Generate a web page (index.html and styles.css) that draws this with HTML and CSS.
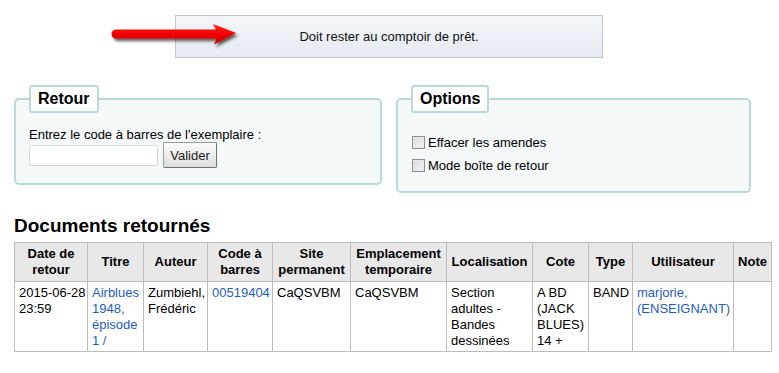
FILE: index.html
```html
<!DOCTYPE html>
<html lang="fr">
<head>
<meta charset="utf-8">
<title>Retour</title>
<link rel="stylesheet" href="styles.css">
</head>
<body>
<div class="top">
  <div class="alert">Doit rester au comptoir de prêt.</div>
  <svg class="arrow" width="136" height="32" viewBox="0 0 136 32" aria-hidden="true">
    <defs>
      <linearGradient id="red" x1="0" y1="0" x2="0" y2="1">
        <stop offset="0" stop-color="#ff2a1a"/>
        <stop offset="0.5" stop-color="#f00000"/>
        <stop offset="1" stop-color="#c80000"/>
      </linearGradient>
      <filter id="sh" x="-10%" y="-30%" width="130%" height="180%">
        <feDropShadow dx="2" dy="2.5" stdDeviation="1.4" flood-color="#000" flood-opacity="0.65"/>
      </filter>
    </defs>
    <path d="M9 9.5 H109 L106 4 L129 13 L107 24.5 L109.5 18.5 H9 A4.5 4.5 0 0 1 9 9.5 Z" fill="url(#red)" filter="url(#sh)"/>
  </svg>
</div>

<div class="panels">
  <fieldset class="box retour">
    <legend>Retour</legend>
    <p class="hint">Entrez le code à barres de l'exemplaire :</p>
    <div class="entry">
      <input class="barcode" type="text">
      <button class="btn" type="button">Valider</button>
    </div>
  </fieldset>
  <fieldset class="box options">
    <legend>Options</legend>
    <label class="opt"><input type="checkbox" class="chk">Effacer les amendes</label>
    <label class="opt"><input type="checkbox" class="chk">Mode boîte de retour</label>
  </fieldset>
</div>

<h2 class="title">Documents retournés</h2>
<table class="returns">
  <colgroup>
    <col class="c1"><col class="c2"><col class="c3"><col class="c4"><col class="c5"><col class="c6"><col class="c7"><col class="c8"><col class="c9"><col class="c10"><col class="c11">
  </colgroup>
  <thead>
    <tr>
      <th>Date de retour</th>
      <th>Titre</th>
      <th>Auteur</th>
      <th>Code à barres</th>
      <th>Site permanent</th>
      <th>Emplacement temporaire</th>
      <th>Localisation</th>
      <th>Cote</th>
      <th>Type</th>
      <th>Utilisateur</th>
      <th>Note</th>
    </tr>
  </thead>
  <tbody>
    <tr>
      <td><span class="nowrap">2015-06-28</span> 23:59</td>
      <td><a href="#">Airblues 1948, épisode 1 /</a></td>
      <td>Zumbiehl, Frédéric</td>
      <td><a href="#">00519404</a></td>
      <td>CaQSVBM</td>
      <td>CaQSVBM</td>
      <td>Section adultes - Bandes dessinées</td>
      <td>A BD (JACK BLUES) 14 +</td>
      <td>BAND</td>
      <td><a href="#">marjorie, (ENSEIGNANT)</a></td>
      <td></td>
    </tr>
  </tbody>
</table>
</body>
</html>
```

FILE: styles.css
```css
html, body {
  margin: 0;
  padding: 0;
  background: #fff;
}
body {
  font-family: "Liberation Sans", Arial, sans-serif;
  font-size: 13px;
  color: #000;
}

.top {
  position: relative;
  padding: 15px 0 0 175px;
}
.alert {
  box-sizing: border-box;
  width: 428px;
  height: 43px;
  border: 1px solid #c4c7cc;
  background: linear-gradient(#f3f5f9, #e6eaf1);
  line-height: 41px;
  text-align: center;
  color: #111;
}
.arrow {
  position: absolute;
  left: 107px;
  top: 20px;
}

.panels {
  display: flex;
  align-items: flex-start;
  gap: 14px;
  margin-top: 27px;
  padding-left: 14px;
}
.box {
  box-sizing: border-box;
  margin: 0;
  padding: 0 13px;
  border: 2px solid #b9d9da;
  border-radius: 5px;
  background: #f4f8f9;
}
.box legend {
  padding: 3px 7px;
  border: 2px solid #b9d9da;
  border-radius: 3px;
  background: #fff;
  font-weight: bold;
  font-size: 16px;
  line-height: 18px;
}
.retour {
  width: 368px;
  height: 100px;
}
.options {
  width: 355px;
  height: 108px;
}
.hint {
  margin: 14px 0 0;
  line-height: 15px;
}
.entry {
  display: flex;
  align-items: center;
  gap: 5px;
}
.barcode {
  box-sizing: border-box;
  width: 129px;
  height: 21px;
  margin: 0;
  border: 1px solid #d6d9dc;
  border-radius: 2px;
  background: #fff;
}
.btn {
  box-sizing: border-box;
  width: 54px;
  height: 26px;
  margin: 0;
  padding: 0;
  border: 1px solid #9a9a9a;
  border-right-color: #707070;
  border-bottom-color: #707070;
  border-radius: 2px;
  background: linear-gradient(#fbfbfb, #dedede);
  font-family: "Liberation Sans", Arial, sans-serif;
  font-size: 13px;
  color: #222;
}
.opt {
  display: flex;
  align-items: center;
  height: 23px;
}
.opt:first-of-type {
  margin-top: 18px;
}
.chk {
  -webkit-appearance: none;
  appearance: none;
  box-sizing: border-box;
  width: 13px;
  height: 13px;
  margin: 0 3px 0 1px;
  border: 1px solid #8e8f8f;
  background: linear-gradient(135deg, #d8d8d8, #f6f6f6);
  box-shadow: inset 0 0 0 1px #e8e8e8;
}

.title {
  margin: 22px 0 5px;
  padding-left: 14px;
  font-size: 19px;
  line-height: 22px;
  font-weight: bold;
}

.returns {
  margin-left: 14px;
  width: 757px;
  table-layout: fixed;
  border-collapse: collapse;
  border: 1px solid #bcbcbc;
}
.c1 { width: 73px; }
.c2 { width: 56px; }
.c3 { width: 64px; }
.c4 { width: 65px; }
.c5 { width: 78px; }
.c6 { width: 96px; }
.c7 { width: 86px; }
.c8 { width: 56px; }
.c9 { width: 44px; }
.c10 { width: 101px; }
.c11 { width: 38px; }
.returns th,
.returns td {
  border: 1px solid #bcbcbc;
  line-height: 16px;
}
.returns th {
  padding: 3px 2px;
  background: #e8e8e8;
  font-weight: bold;
  text-align: center;
  vertical-align: middle;
}
.returns td {
  padding: 3px 2px 2px 4px;
  vertical-align: top;
  text-align: left;
}
.nowrap {
  white-space: nowrap;
}
.returns a {
  color: #1f5cbf;
  text-decoration: none;
}
```
